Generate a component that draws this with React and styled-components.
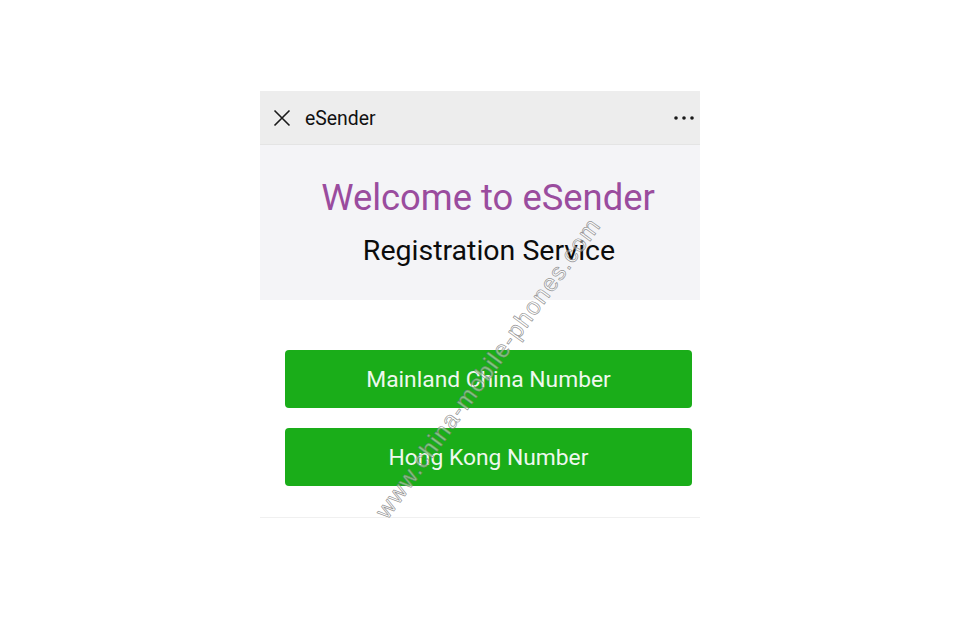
import React from 'react';
import styled, { createGlobalStyle } from 'styled-components';

const GlobalStyle = createGlobalStyle`
  html, body {
    margin: 0;
    padding: 0;
    background: #ffffff;
  }
  body {
    font-family: Roboto, "Liberation Sans", sans-serif;
  }
`

const Page = styled.div`
  position: relative;
  width: 960px;
  height: 620px;
  padding: 91px 0 0 260px;
  box-sizing: border-box;
  overflow: hidden;
`

const Phone = styled.div`
  width: 440px;
  display: flex;
  flex-direction: column;
`

const TopBar = styled.div`
  height: 54px;
  background: #ededed;
  display: flex;
  align-items: center;
  padding: 1px 4px 0 13px;
  border-bottom: 1px solid #e4e4e4;
  box-sizing: border-box;
`

const Title = styled.div`
  flex: 1;
  margin-left: 14px;
  font-size: 19.4px;
  color: #111;
`

const IconButton = styled.svg`
  display: block;
  stroke: #1a1a1a;
  fill: none;
`

const Dots = styled.svg`
  display: block;
  fill: #1a1a1a;
`

const Welcome = styled.div`
  height: 155px;
  background: #f4f4f7;
  display: flex;
  flex-direction: column;
  align-items: center;
  padding-top: 31px;
  box-sizing: border-box;
`

const Heading = styled.h1`
  margin: 0 0 0 16px;
  font-weight: 400;
  font-size: 36.4px;
  line-height: 44px;
  color: #9a4c9e;
`

const Sub = styled.div`
  font-size: 28.5px;
  line-height: 34px;
  color: #0c0c0c;
  margin: 14px 0 0 18px;
`

const Choices = styled.div`
  display: flex;
  flex-direction: column;
  gap: 20px;
  padding: 50px 8px 31px 25px;
  border-bottom: 1px solid #f0f0f0;
`

const GreenButton = styled.button`
  height: 58px;
  border: 0;
  border-radius: 4px;
  background: #1aad19;
  color: #eef8ee;
  font-family: Roboto, "Liberation Sans", sans-serif;
  font-size: 22.8px;
  cursor: pointer;
`

const Watermark = styled.div`
  position: absolute;
  left: 295px;
  top: 354px;
  width: 386px;
  text-align: center;
  font-family: "Liberation Sans", sans-serif;
  font-size: 24px;
  letter-spacing: 1.2px;
  color: rgba(255, 255, 255, 0.45);
  -webkit-text-stroke: 0.7px rgba(120, 120, 120, 0.8);
  transform: rotate(-54deg);
  pointer-events: none;
  white-space: nowrap;
`

const App = () => (
  <>
    <GlobalStyle />
    <Page>
      <Phone>
        <TopBar>
          <IconButton width="18" height="18" viewBox="0 0 18 18" strokeWidth="1.6">
            <path d="M1.5 1.5 L16.5 16.5 M16.5 1.5 L1.5 16.5" />
          </IconButton>
          <Title>eSender</Title>
          <Dots width="24" height="6" viewBox="0 0 24 6">
            <circle cx="4" cy="3" r="1.8" />
            <circle cx="12" cy="3" r="1.8" />
            <circle cx="20" cy="3" r="1.8" />
          </Dots>
        </TopBar>
        <Welcome>
          <Heading>Welcome to eSender</Heading>
          <Sub>Registration Service</Sub>
        </Welcome>
        <Choices>
          <GreenButton>Mainland China Number</GreenButton>
          <GreenButton>Hong Kong Number</GreenButton>
        </Choices>
      </Phone>
      <Watermark>www.china-mobile-phones.com</Watermark>
    </Page>
  </>
)

export default App
